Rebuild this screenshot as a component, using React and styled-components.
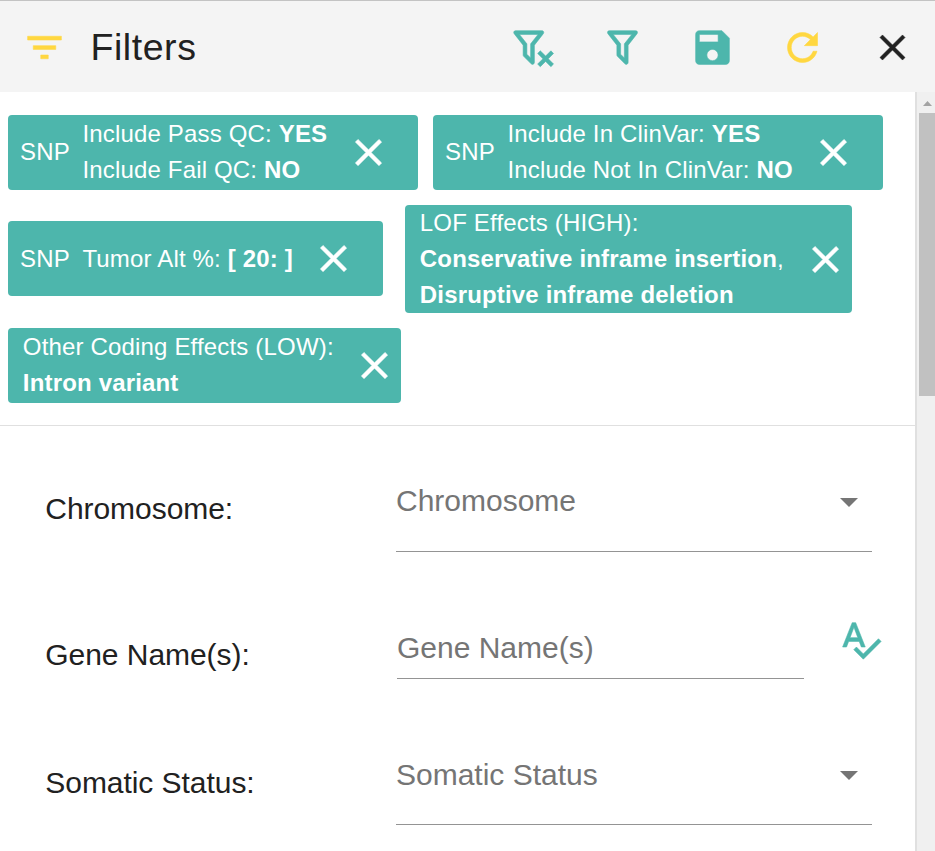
import React from 'react';
import styled, { createGlobalStyle } from 'styled-components';

const TEAL = '#4db6ac';
const YELLOW = '#ffd740';
const INK = '#212121';

const GlobalStyle = createGlobalStyle`
  *, *::before, *::after { box-sizing: border-box; }
  body {
    margin: 0;
    background: #fff;
    color: ${INK};
    font-family: "Liberation Sans", Arial, sans-serif;
    overflow: hidden;
  }
  button { border: 0; padding: 0; background: none; cursor: pointer; font: inherit; }
`;

const Panel = styled.div`
  display: flex;
  flex-direction: column;
  height: 851px;
  background: #fff;
`;

const Toolbar = styled.header`
  display: flex;
  align-items: center;
  flex: none;
  height: 92px;
  padding: 2px 20px 0 22px;
  background: #f4f4f4;
  border-top: 1px solid #c3c3c3;
`;

const Title = styled.h1`
  flex: 1;
  margin: 0 0 1px 23.5px;
  font-size: 37.5px;
  font-weight: 400;
  line-height: 60px;
  letter-spacing: 0.55px;
`;

const Actions = styled.div`
  display: flex;
  gap: 45px;
`;

const IconButton = styled.button`
  display: flex;
  flex: none;
  align-items: center;
  justify-content: center;
  width: 45px;
  height: 45px;
  color: ${(p) => p.$color || 'inherit'};
`;

const Glyph = styled.svg`
  display: block;
  flex: none;
  width: ${(p) => p.$size}px;
  height: ${(p) => p.$size}px;
  fill: currentColor;
  stroke: currentColor;
  stroke-width: 0.3;
`;

const Body = styled.div`
  display: flex;
  flex: 1;
  min-height: 0;
`;

const Content = styled.main`
  flex: 1;
  min-width: 0;
  overflow: hidden;
  border-right: 2px solid #e0e0e0;
`;

const ChipArea = styled.section`
  display: flex;
  flex-direction: column;
  gap: 15px;
  height: 334px;
  padding: 23px 8px 0;
  border-bottom: 1px solid #e0e0e0;
`;

const ChipRow = styled.div`
  display: flex;
  align-items: center;
  gap: ${(p) => p.$gap || 15}px;
`;

const Chip = styled.div`
  display: flex;
  align-items: center;
  flex: none;
  width: ${(p) => p.$width}px;
  min-height: 75px;
  margin-bottom: ${(p) => (p.$single ? 1 : 0)}px;
  padding: 0 ${(p) => (p.$tagged ? 27 : 4)}px 0 ${(p) => (p.$tagged ? 12 : 14.8)}px;
  border-radius: 4px;
  background: ${TEAL};
  color: #fff;
  font-size: 24px;
  line-height: 36px;
  letter-spacing: 0.17px;
  white-space: nowrap;
`;

const ChipTag = styled.span`
  width: 62.4px;
  margin: ${(p) => (p.$single ? '0' : '-0.5px 0 0.5px')};
`;

const ChipLines = styled.div`
  flex: 1;
  margin: ${(p) => (p.$single ? '0' : '-0.5px 0 0.5px')};
`;

const Form = styled.form`
  display: flex;
  flex-direction: column;
`;

const FieldRow = styled.div`
  display: flex;
  height: ${(p) => p.$height}px;
  padding-left: 45.3px;
`;

const Label = styled.label`
  flex: none;
  width: 350.7px;
  padding-top: ${(p) => p.$top}px;
  font-size: 30px;
  line-height: 36px;
  letter-spacing: -0.05px;
`;

const Control = styled.div`
  display: flex;
  justify-content: space-between;
  align-items: flex-start;
  width: ${(p) => p.$width}px;
  margin-left: ${(p) => p.$inset || 0}px;
  padding-top: ${(p) => p.$top}px;
  padding-right: ${(p) => (p.$select ? 2 : 0)}px;
  border-bottom: 1px solid #949494;
  color: #757575;
  font-size: 30px;
  line-height: 36px;
`;

const Caret = styled.svg`
  width: 18px;
  height: 9px;
  margin: ${(p) => p.$drop}px 12px 0 0;
  fill: #757575;
`;

const CheckButton = styled(IconButton)`
  margin: ${(p) => p.$top}px 0 0 34px;
`;

const Scrollbar = styled.div`
  display: flex;
  flex-direction: column;
  align-items: flex-end;
  width: 18px;
  background: #f0f0f0;
`;

const ScrollArrow = styled.svg`
  width: 9px;
  height: 5px;
  margin: 9px 3px 7px 0;
  fill: #a3a3a3;
`;

const ScrollThumb = styled.div`
  width: 16px;
  height: 283px;
  background: #c1c1c1;
`;

const PATHS = {
  list: 'M10 18h4v-2h-4v2zM3 6v2h18V6H3zm3 7h12v-2H6v2z',
  filterRemove:
    'M14.73,20.83L17.58,18L14.73,15.17L16.15,13.76L19,16.57L21.8,13.76L23.22,15.17L20.41,18L23.22,20.83L21.8,22.24L19,19.4L16.15,22.24L14.73,20.83M13,19.88C13.04,20.18 12.94,20.5 12.71,20.71C12.32,21.1 11.69,21.1 11.29,20.71L7.29,16.7C7.06,16.47 6.96,16.16 7,15.87V10.75L2.21,4.62C1.87,4.19 1.95,3.56 2.38,3.22C2.57,3.08 2.78,3 3,3V3H17V3C17.22,3 17.43,3.08 17.62,3.22C18.05,3.56 18.13,4.19 17.79,4.62L13,10.75V19.88M5.04,5L9,10.06V15.58L11,17.58V10.05L14.96,5H5.04Z',
  filter:
    'M15,19.88C15.04,20.18 14.94,20.5 14.71,20.71C14.32,21.1 13.69,21.1 13.29,20.71L9.29,16.7C9.06,16.47 8.96,16.16 9,15.87V10.75L4.21,4.62C3.87,4.19 3.95,3.56 4.38,3.22C4.57,3.08 4.78,3 5,3V3H19V3C19.22,3 19.43,3.08 19.62,3.22C20.05,3.56 20.13,4.19 19.79,4.62L15,10.75V19.88M7.04,5L11,10.06V15.58L13,17.58V10.05L16.96,5H7.04Z',
  save: 'M17 3H5c-1.11 0-2 .9-2 2v14c0 1.1.89 2 2 2h14c1.1 0 2-.9 2-2V7l-4-4zm-5 16c-1.66 0-3-1.34-3-3s1.34-3 3-3 3 1.34 3 3-1.34 3-3 3zm3-10H5V5h10v4z',
  refresh:
    'M17.65 6.35C16.2 4.9 14.21 4 12 4c-4.42 0-7.99 3.58-7.99 8s3.57 8 7.99 8c3.73 0 6.84-2.55 7.73-6h-2.08c-.82 2.33-3.04 4-5.65 4-3.31 0-6-2.69-6-6s2.69-6 6-6c1.66 0 3.14.69 4.22 1.78L13 11h7V4l-2.35 2.35z',
  close:
    'M19 6.41L17.59 5 12 10.59 6.41 5 5 6.41 10.59 12 5 17.59 6.41 19 12 13.41 17.59 19 19 17.59 13.41 12z',
  spellcheck:
    'M12.45 16h2.09L9.43 3H7.57L2.46 16h2.09l1.12-3h5.64l1.14 3zm-6.02-5L8.5 5.48 10.57 11H6.43zm15.16.59l-8.09 8.09L9.83 16l-1.41 1.41 5.09 5.09L23 13l-1.41-1.41z',
};

function Icon({ name, size = 45 }) {
  return (
    <Glyph $size={size} viewBox="0 0 24 24" aria-hidden="true">
      <path d={PATHS[name]} />
    </Glyph>
  );
}

function FilterChip({ tag, width, single, children }) {
  return (
    <Chip $width={width} $tagged={Boolean(tag)} $single={single}>
      {tag && <ChipTag $single={single}>{tag}</ChipTag>}
      <ChipLines $single={single}>{children}</ChipLines>
      <IconButton type="button" aria-label="Remove filter">
        <Icon name="close" />
      </IconButton>
    </Chip>
  );
}

function SelectField({ children, top, drop = 14 }) {
  return (
    <Control $width={476} $top={top} $select>
      {children}
      <Caret viewBox="0 0 18 9" aria-hidden="true" $drop={drop}>
        <path d="M0 0h18L9 9z" />
      </Caret>
    </Control>
  );
}

export default function App() {
  return (
    <>
      <GlobalStyle />
      <Panel>
        <Toolbar>
          <IconButton as="span" $color={YELLOW}><Icon name="list" /></IconButton>
          <Title>Filters</Title>
          <Actions>
            <IconButton type="button" aria-label="Clear filters" $color={TEAL}><Icon name="filterRemove" /></IconButton>
            <IconButton type="button" aria-label="Apply filters" $color={TEAL}><Icon name="filter" /></IconButton>
            <IconButton type="button" aria-label="Save" $color={TEAL}><Icon name="save" /></IconButton>
            <IconButton type="button" aria-label="Refresh" $color={YELLOW}><Icon name="refresh" /></IconButton>
            <IconButton type="button" aria-label="Close" $color={INK}><Icon name="close" size={43} /></IconButton>
          </Actions>
        </Toolbar>
        <Body>
          <Content>
            <ChipArea>
              <ChipRow>
                <FilterChip tag="SNP" width={410}>
                  <div>Include Pass QC: <b>YES</b></div>
                  <div>Include Fail QC: <b>NO</b></div>
                </FilterChip>
                <FilterChip tag="SNP" width={450}>
                  <div>Include In ClinVar: <b>YES</b></div>
                  <div>Include Not In ClinVar: <b>NO</b></div>
                </FilterChip>
              </ChipRow>
              <ChipRow $gap={22}>
                <FilterChip tag="SNP" width={375} single>
                  <div>Tumor Alt %: <b>[ 20: ]</b></div>
                </FilterChip>
                <FilterChip width={447}>
                  <div>LOF Effects (HIGH):</div>
                  <div><b>Conservative inframe insertion</b>,</div>
                  <div><b>Disruptive inframe deletion</b></div>
                </FilterChip>
              </ChipRow>
              <ChipRow>
                <FilterChip width={393}>
                  <div>Other Coding Effects (LOW):</div>
                  <div><b>Intron variant</b></div>
                </FilterChip>
              </ChipRow>
            </ChipArea>
            <Form>
              <FieldRow $height={126}>
                <Label $top={65}>Chromosome:</Label>
                <SelectField top={57} drop={15}>Chromosome</SelectField>
              </FieldRow>
              <FieldRow $height={127}>
                <Label $top={85}>Gene Name(s):</Label>
                <Control $width={407} $inset={1} $top={78}>Gene Name(s)</Control>
                <CheckButton type="button" aria-label="Check gene names" $color={TEAL} $top={65}>
                  <Icon name="spellcheck" />
                </CheckButton>
              </FieldRow>
              <FieldRow $height={146}>
                <Label $top={86}>Somatic Status:</Label>
                <SelectField top={78}>Somatic Status</SelectField>
              </FieldRow>
            </Form>
          </Content>
          <Scrollbar>
            <ScrollArrow viewBox="0 0 9 5" aria-hidden="true">
              <path d="M4.5 0L9 5H0z" />
            </ScrollArrow>
            <ScrollThumb />
          </Scrollbar>
        </Body>
      </Panel>
    </>
  );
}
